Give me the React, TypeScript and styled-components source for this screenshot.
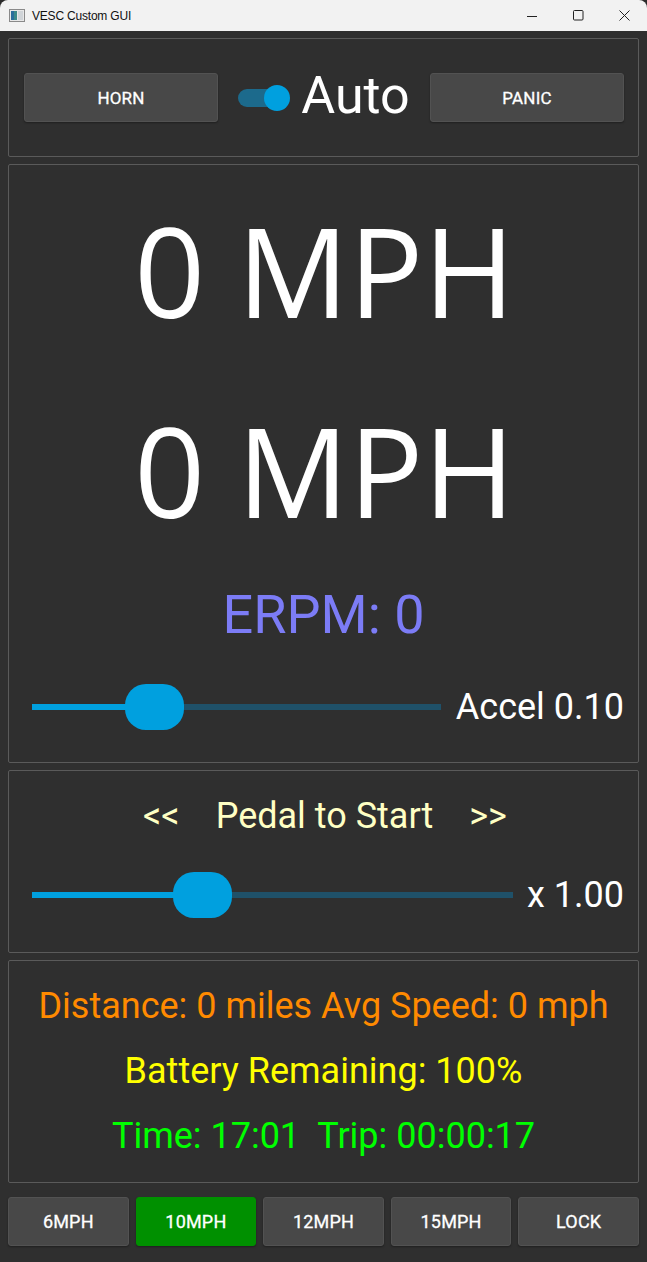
import React from "react";
import styled, { createGlobalStyle } from "styled-components";

const Global = createGlobalStyle`
  * { box-sizing: border-box; }
  html, body { margin: 0; padding: 0; background: #2b2b2b; }
  body { font-family: Roboto, "Noto Sans", sans-serif; }
`;

const Window = styled.div`
  width: 647px;
  height: 1262px;
  display: flex;
  flex-direction: column;
  background: #2f2f2f;
  border-radius: 8px 8px 0 0;
  overflow: hidden;
`;

const TitleBar = styled.div`
  height: 31px;
  flex: none;
  display: flex;
  align-items: center;
  background: #f2f2f2;
  padding-left: 9px;
  color: #111;
  font-family: "Liberation Sans", Arial, sans-serif;
  font-size: 12px;
`;

const TitleText = styled.span`
  margin-left: 7px;
  flex: 1;
  padding-top: 1px;
  letter-spacing: -0.2px;
`;

const WinControls = styled.div`
  display: flex;
  align-items: center;
  height: 100%;
`;

const WinButton = styled.div`
  width: 46px;
  height: 100%;
  display: flex;
  align-items: center;
  justify-content: center;
`;

const Content = styled.div`
  flex: 1;
  display: flex;
  flex-direction: column;
  padding: 7px 8px 0 8px;
  gap: 7px;
`;

const Panel = styled.div<{ $h: number }>`
  height: ${(p) => p.$h}px;
  flex: none;
  border: 1px solid #5a5a5a;
  border-radius: 2px;
  display: flex;
  flex-direction: column;
`;

const TopRow = styled(Panel)`
  flex-direction: row;
  align-items: center;
  justify-content: space-between;
  padding: 0 14px 0 15px;
`;

const Button = styled.button<{ $active?: boolean }>`
  border: 1px solid ${(p) => (p.$active ? "#009000" : "#525252")};
  background: ${(p) => (p.$active ? "#009000" : "#484848")};
  color: #fff;
  border-radius: 3px;
  font-family: Roboto, sans-serif;
  font-weight: 400;
  font-size: 17px;
  letter-spacing: 0.2px;
  box-shadow: 0 1px 2px rgba(0, 0, 0, 0.35);
  display: flex;
  align-items: center;
  justify-content: center;
  padding: 0;
  -webkit-text-stroke: 0.3px #fff;
`;

const BigButton = styled(Button)`
  width: 194px;
  height: 49px;
  padding-top: 1px;
`;

const ToggleGroup = styled.div`
  display: flex;
  align-items: center;
  gap: 11px;
`;

const Toggle = styled.div`
  position: relative;
  width: 52px;
  height: 26px;
`;

const ToggleTrack = styled.div`
  position: absolute;
  left: 0;
  top: 4px;
  width: 46px;
  height: 18px;
  border-radius: 9px;
  background: #1c6a8c;
`;

const ToggleKnob = styled.div`
  position: absolute;
  right: 0;
  top: 0;
  width: 26px;
  height: 26px;
  border-radius: 50%;
  background: #00a0df;
`;

const AutoLabel = styled.span`
  color: #fff;
  font-size: 52px;
  line-height: 52px;
  margin-top: -4px;
`;

const Speed = styled.div`
  font-family: "Open Sans", "Noto Sans", sans-serif;
  font-size: 124px;
  line-height: 200px;
  height: 200px;
  color: #fff;
  text-align: center;
  padding-left: 2px;
`;

const SpeedBlock = styled.div`
  padding-top: 5px;
`;

const Erpm = styled.div`
  font-size: 54px;
  line-height: 60px;
  color: #7c7cf6;
  text-align: center;
  margin-top: 15px;
`;

const SliderRow = styled.div<{ $mt: number }>`
  display: flex;
  align-items: center;
  height: 46px;
  margin-top: ${(p) => p.$mt}px;
  padding: 0 14px 0 23px;
`;

const SliderTrack = styled.div`
  position: relative;
  flex: 1;
  height: 46px;
`;

const TrackRest = styled.div`
  position: absolute;
  left: 0;
  right: 0;
  top: 20px;
  height: 6px;
  background: #1f5169;
`;

const TrackFill = styled.div`
  position: absolute;
  left: 0;
  top: 20px;
  height: 6px;
  background: #00a0df;
`;

const SliderKnob = styled.div`
  position: absolute;
  top: 0;
  width: 59px;
  height: 46px;
  border-radius: 21px;
  background: #00a0df;
`;

const SliderValue = styled.span<{ $gap: number }>`
  color: #fff;
  font-size: 36px;
  line-height: 46px;
  margin-left: ${(p) => p.$gap}px;
  white-space: pre;
`;

const PedalLine = styled.div`
  display: flex;
  justify-content: center;
  gap: 36px;
  color: #ffffc4;
  font-size: 36px;
  line-height: 42px;
  margin-top: 24px;
  padding-left: 3px;
`;

const StatsBlock = styled.div`
  padding-top: 13px;
  display: flex;
  flex-direction: column;
  align-items: center;
`;

const Stat = styled.div<{ $color: string }>`
  color: ${(p) => p.$color};
  font-size: 36px;
  line-height: 65px;
  white-space: pre;
  text-align: center;
`;

const BottomRow = styled.div`
  display: flex;
  gap: 7px;
  margin-top: 7px;
`;

const SpeedButton = styled(Button)`
  flex: 1;
  height: 49px;
  font-size: 18px;
`;

function Slider({ ratio }: { ratio: number }) {
  const left = `calc(${ratio} * (100% - 59px))`;
  const fill = `calc(${ratio} * (100% - 59px) + 29px)`;
  return (
    <SliderTrack>
      <TrackRest />
      <TrackFill style={{ width: fill }} />
      <SliderKnob style={{ left }} />
    </SliderTrack>
  );
}

function AppIcon() {
  return (
    <svg width="16" height="13" viewBox="0 0 16 13">
      <rect x="0.5" y="0.5" width="15" height="12" fill="#e8e8e8" stroke="#8a8a8a" />
      <rect x="2" y="2" width="6" height="9" fill="#3c8a8a" />
      <rect x="2" y="2" width="3" height="9" fill="#2a6e9c" />
      <rect x="9" y="2" width="5" height="9" fill="#d0d4d8" />
    </svg>
  );
}

export default function App() {
  const bottom = ["6MPH", "10MPH", "12MPH", "15MPH", "LOCK"];
  return (
    <>
      <Global />
      <Window>
        <TitleBar>
          <AppIcon />
          <TitleText>VESC Custom GUI</TitleText>
          <WinControls>
            <WinButton>
              <svg width="12" height="10" viewBox="0 0 12 10">
                <line x1="1" y1="5.5" x2="11" y2="5.5" stroke="#222" strokeWidth="1" />
              </svg>
            </WinButton>
            <WinButton>
              <svg width="11" height="11" viewBox="0 0 11 11">
                <rect x="0.5" y="0.5" width="9.5" height="9.5" rx="1" fill="none" stroke="#222" strokeWidth="1" />
              </svg>
            </WinButton>
            <WinButton>
              <svg width="11" height="11" viewBox="0 0 11 11">
                <path d="M0.5 0.5 L10.5 10.5 M10.5 0.5 L0.5 10.5" stroke="#222" strokeWidth="1" />
              </svg>
            </WinButton>
          </WinControls>
        </TitleBar>
        <Content>
          <TopRow $h={119}>
            <BigButton>HORN</BigButton>
            <ToggleGroup>
              <Toggle>
                <ToggleTrack />
                <ToggleKnob />
              </Toggle>
              <AutoLabel>Auto</AutoLabel>
            </ToggleGroup>
            <BigButton>PANIC</BigButton>
          </TopRow>
          <Panel $h={599}>
            <SpeedBlock>
              <Speed>0 MPH</Speed>
              <Speed>0 MPH</Speed>
            </SpeedBlock>
            <Erpm>ERPM: 0</Erpm>
            <SliderRow $mt={39}>
              <Slider ratio={0.265} />
              <SliderValue $gap={15}>Accel 0.10</SliderValue>
            </SliderRow>
          </Panel>
          <Panel $h={183}>
            <PedalLine>
              <span>&lt;&lt;</span>
              <span>Pedal to Start</span>
              <span>&gt;&gt;</span>
            </PedalLine>
            <SliderRow $mt={35}>
              <Slider ratio={0.333} />
              <SliderValue $gap={14}>x 1.00</SliderValue>
            </SliderRow>
          </Panel>
          <Panel $h={223}>
            <StatsBlock>
              <Stat $color="#ff8a00">Distance: 0 miles Avg Speed: 0 mph</Stat>
              <Stat $color="#ffff00">Battery Remaining: 100%</Stat>
              <Stat $color="#00ff00">{"Time: 17:01  Trip: 00:00:17"}</Stat>
            </StatsBlock>
          </Panel>
          <BottomRow>
            {bottom.map((b) => (
              <SpeedButton key={b} $active={b === "10MPH"}>
                {b}
              </SpeedButton>
            ))}
          </BottomRow>
        </Content>
      </Window>
    </>
  );
}
